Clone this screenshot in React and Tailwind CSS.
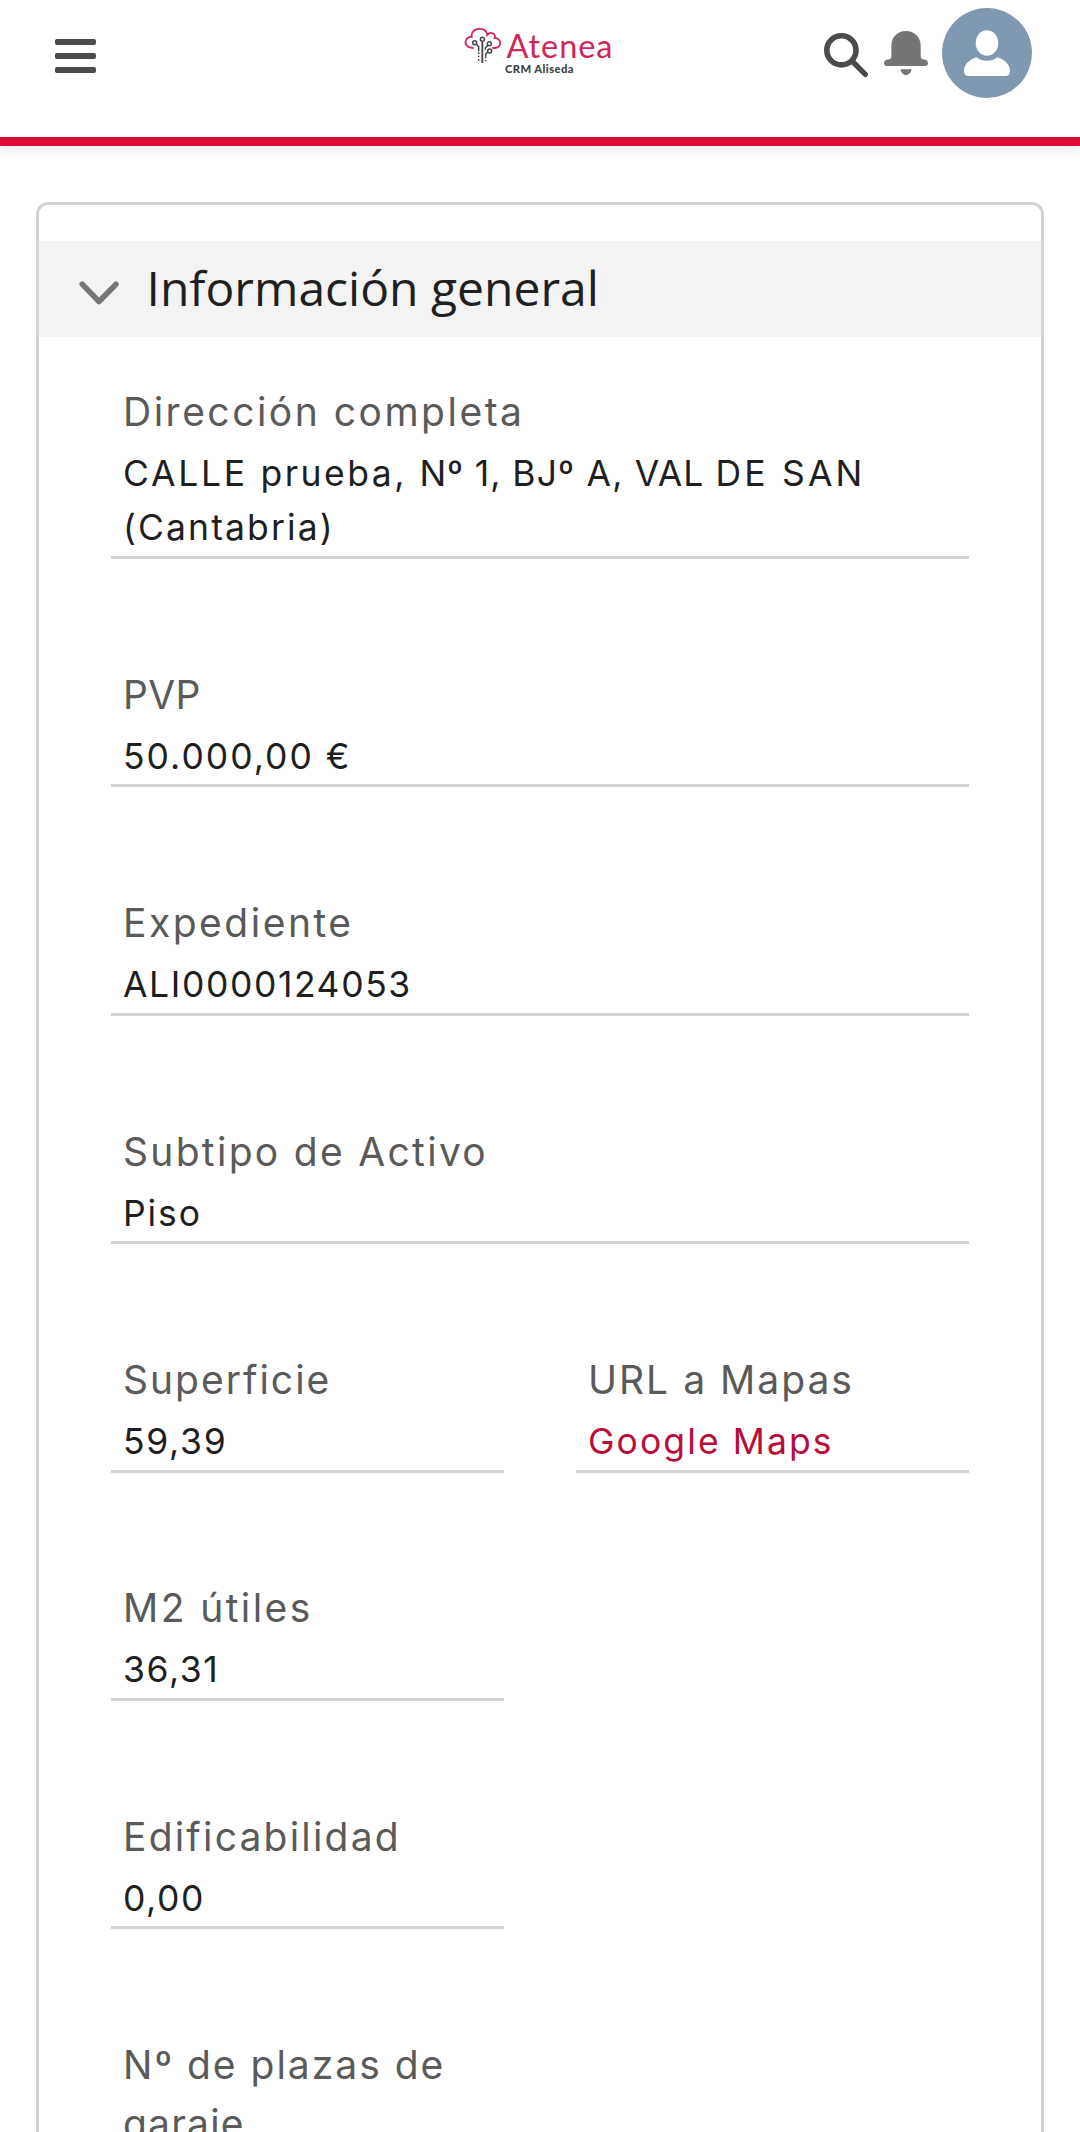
import React from "react";

function Logo() {
  return (
    <svg className="mt-5 ml-[359px] h-[60px] w-[165px] shrink-0" viewBox="0 0 165 60" role="img" aria-label="Atenea CRM Aliseda">
      <g transform="translate(0 -0.7) scale(0.33333)" fill="none" strokeLinecap="round">
        <path
          d="M54 86C36 86 28 74 33 63C36 55 43 52 50 53C47 36 64 26 78 29C90 31 96 38 97 47C107 35 123 43 119 56C139 56 143 84 120 86H114"
          stroke="#d6295a"
          strokeWidth="5.5"
        />
        <g stroke="#454545" strokeWidth="4.5">
          <circle cx="59" cy="70" r="6" />
          <circle cx="82" cy="60" r="6" />
          <circle cx="103" cy="73" r="6" />
          <circle cx="104" cy="95" r="6" />
          <path d="M82 68V131" strokeWidth="5.5" strokeLinecap="butt" />
          <path d="M64 75L71 82V94M98 78L91 86V90M98 98L92 105V111" />
          <path d="M71 99V126M92 112V126" strokeDasharray="5 5" strokeLinecap="butt" />
        </g>
      </g>
      <text x="51.5" y="37.7" fill="#cf2655" fontFamily="Lato, sans-serif" fontSize="32.5" textLength="106">
        Atenea
      </text>
      <text x="50" y="53" fill="#3f3f3f" fontFamily="Lato, sans-serif" fontWeight="900" fontSize="11.2" textLength="68.5">
        CRM Aliseda
      </text>
    </svg>
  );
}

function Header() {
  return (
    <header className="flex h-[146px] items-start border-b-[9px] border-[#d90d35] bg-white pl-[55px] shadow-[0_6px_8px_rgba(40,20,80,0.07)]">
      <button aria-label="Menú" className="mt-[39px] flex w-[41px] shrink-0 flex-col gap-2">
        <span className="h-1.5 rounded-[2px] bg-[#4b4b4b]" />
        <span className="h-1.5 rounded-[2px] bg-[#4b4b4b]" />
        <span className="h-1.5 rounded-[2px] bg-[#4b4b4b]" />
      </button>
      <Logo />
      <svg className="mt-8 ml-[204px] h-[46px] w-[44px] shrink-0" viewBox="0 0 44 46" fill="none" stroke="#4b4b4b">
        <circle cx="17.4" cy="18.3" r="14.6" strokeWidth="5.6" />
        <path d="M28.5 29.5L41.3 42.3" strokeWidth="5.4" strokeLinecap="round" />
      </svg>
      <svg className="mt-[31px] ml-4 h-[44px] w-[44px] shrink-0" viewBox="0 0 44 44" fill="#757575">
        <path d="M22 0C13.5 0 7.4 6.3 7.4 14.5V25C7.4 27.3 6.5 28.3 4.3 28.5C1.6 28.7 0 30 0 32.2C0 34 1.2 35 3 35H41C42.8 35 44 34 44 32.2C44 30 42.4 28.7 39.9 28.5C37.6 28.3 36.7 27.3 36.7 25V14.5C36.7 6.3 30.5 0 22 0Z" />
        <path d="M17.5 38.3H26.5C27.3 38.3 27.6 38.8 27.3 39.5C26.3 42.3 24.4 44 22 44C19.6 44 17.7 42.3 16.7 39.5C16.4 38.8 16.7 38.3 17.5 38.3Z" />
      </svg>
      <div className="mt-2 ml-[14px] size-[90px] shrink-0 rounded-full bg-[#8199b0]">
        <svg viewBox="0 0 90 90" fill="#fff">
          <ellipse cx="45" cy="35" rx="11.3" ry="12.8" />
          <path d="M34.5 49.3C40 54 50 54 55.5 49.3C62 51.5 68 56 68 63C68 66 66.5 68 63.5 68H26.5C23.5 68 22 66 22 63C22 56 28 51.5 34.5 49.3Z" />
        </svg>
      </div>
    </header>
  );
}

function Field({ label, labelClass, value, valueClass, half, children }) {
  return (
    <div className={half ? "w-[393px]" : "w-[858px]"}>
      <div className={`pr-2 pl-3 text-[39px] leading-[58.4px] text-[#5a5a5a] ${labelClass}`}>{label}</div>
      <div className="mt-[5.6px] border-b-[3px] border-[#d3d3d3] pb-[0.6px] pl-3">
        <div className={`text-[35.5px] leading-[54px] whitespace-nowrap text-[#1f1f1f] ${valueClass}`}>{children || value}</div>
      </div>
    </div>
  );
}

export default function App() {
  return (
    <div className="h-[2132px] w-[1080px] overflow-hidden bg-white font-['Inter',sans-serif]">
      <Header />
      <main className="mx-9 mt-14 h-[2000px] rounded-t-xl border-[3px] border-[#d3d3d3] pt-9">
        <button className="flex h-24 w-full bg-[#f3f3f3] pl-10 text-left">
          <svg className="mt-10 h-6 w-10" viewBox="0 0 40 24" fill="none" stroke="#757575" strokeWidth="5.5" strokeLinecap="round" strokeLinejoin="round">
            <path d="M3.2 3.2L20 20.5L37 3.2" />
          </svg>
          <span className="ml-[27.5px] font-['Open_Sans',sans-serif] text-[48px] leading-[94px] text-[#1f1f1f]">Información general</span>
        </button>
        <section className="flex flex-col gap-[106.8px] px-[72px] pt-[46.4px]">
          <Field label="Dirección completa" labelClass="tracking-[2.5px]" valueClass="">
            <span className="tracking-[2.7px]">CALLE </span>
            <span className="tracking-[2.5px]">prueba, </span>
            <span className="tracking-[0.9px]">Nº 1, </span>
            <span className="tracking-[1.2px]">BJº A, </span>
            <span className="tracking-[1px]">VAL </span>
            <span className="tracking-[3.2px]">DE SAN</span>
            <br />
            <span className="tracking-[2.1px]">(Cantabria)</span>
          </Field>
          <Field label="PVP" labelClass="tracking-[0.4px]" value="50.000,00 €" valueClass="tracking-[2px]" />
          <Field label="Expediente" labelClass="tracking-[2.5px]" value="ALI0000124053" valueClass="tracking-[1.6px]" />
          <Field label="Subtipo de Activo" labelClass="tracking-[2.3px]" value="Piso" valueClass="tracking-[1.9px]" />
          <div className="flex justify-between">
            <Field half label="Superficie" labelClass="tracking-[2px]" value="59,39" valueClass="tracking-[1.7px]" />
            <Field half label="URL a Mapas" labelClass="tracking-[2px]" valueClass="tracking-[2.1px]">
              <a href="#mapa" className="text-[#ba0c3a]">Google Maps</a>
            </Field>
          </div>
          <Field half label="M2 útiles" labelClass="tracking-[2.4px]" value="36,31" valueClass="tracking-[1.6px]" />
          <Field half label="Edificabilidad" labelClass="tracking-[2.2px]" value="0,00" valueClass="tracking-[1.6px]" />
          <div className="w-[393px] pl-3 text-[39px] leading-[58.4px] text-[#5a5a5a]">
            <span className="tracking-[2px]">Nº de plazas de </span>
            <span className="tracking-[1.2px]">garaje</span>
          </div>
        </section>
      </main>
    </div>
  );
}
